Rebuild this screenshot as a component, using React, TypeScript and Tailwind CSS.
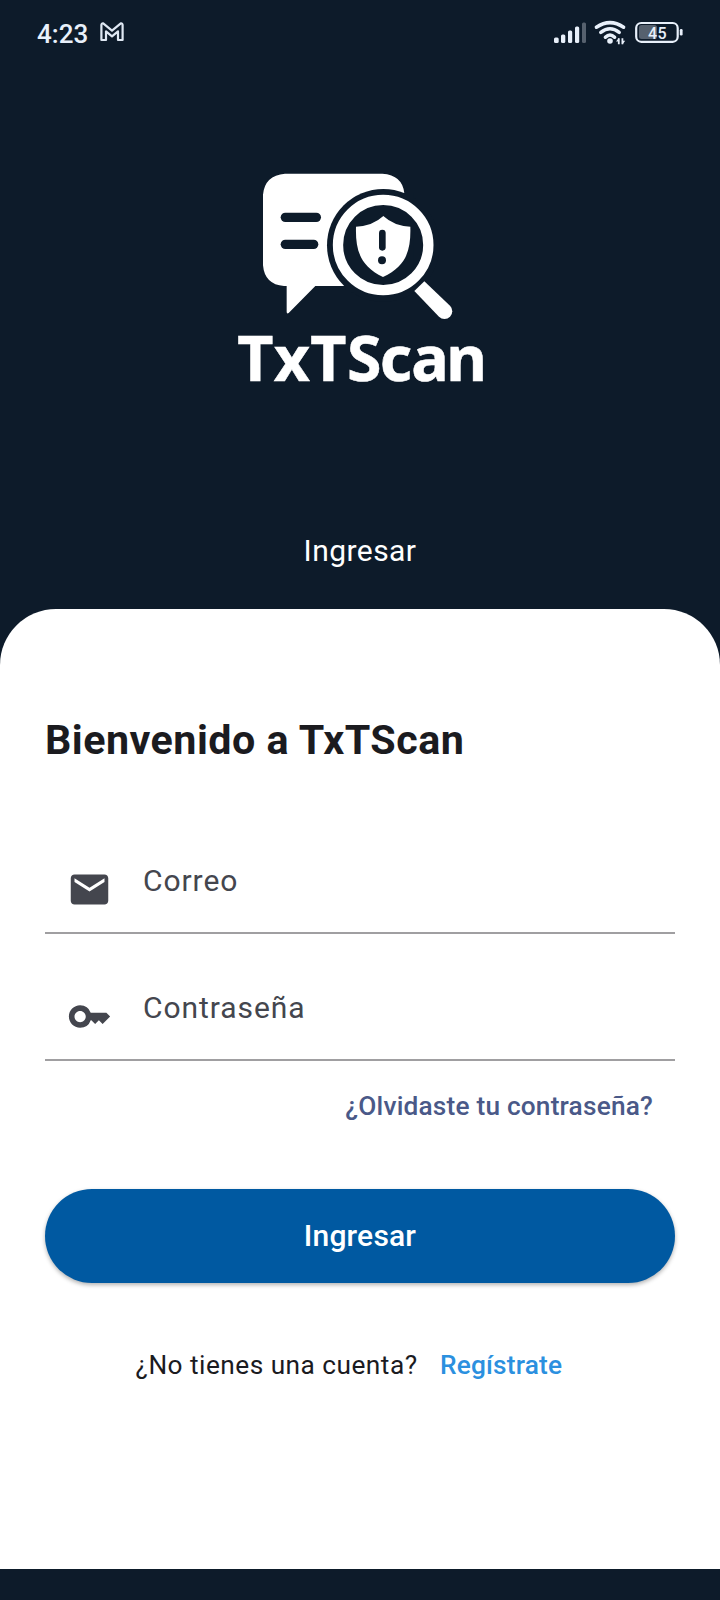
import type { ReactNode } from "react";
import { MdEmail, MdKey } from "react-icons/md";

function GmailIcon() {
  return (
    <svg className="ml-3 h-5 w-6" viewBox="0 0 24 20" fill="none" stroke="#dfe8f3" strokeWidth="2.2" strokeLinejoin="round">
      <path d="M1.4 18V3Q1.4 1.2 3.2 1.4L12 8.6 20.8 1.4Q22.6 1.2 22.6 3V18H18V9.4L12 14.4 6 9.4V18Z" />
    </svg>
  );
}

function SignalIcon() {
  return (
    <svg className="h-6 w-8" viewBox="0 0 32 24" fill="#e8f0fa">
      <rect x="0" y="17.5" width="4.7" height="5.5" rx="1.5" />
      <rect x="7" y="14.5" width="4.3" height="8.5" rx="1.5" />
      <rect x="14" y="10.5" width="4.2" height="12.5" rx="1.5" />
      <rect x="21" y="6.5" width="4.2" height="16.5" rx="1.5" />
      <rect x="28" y="2.5" width="4" height="20.5" rx="1.5" fill="#56616e" />
    </svg>
  );
}

function WifiIcon() {
  return (
    <svg className="ml-2 h-6 w-8 overflow-visible" viewBox="0 0 32 24" fill="none" stroke="#e8f0fa" strokeWidth="3.5" strokeLinecap="round">
      <path d="M2.4 7.2Q16-2 29.6 7.2" />
      <path d="M6.8 12.4Q16 5.2 25.2 12.4" />
      <path d="M11.4 17.2Q16 12.6 20.6 17.2" />
      <circle cx="16" cy="21" r="2.8" fill="#e8f0fa" stroke="none" />
      <path d="M24.8 18.2v6M28.4 18.2v6" strokeWidth="1.8" strokeLinecap="butt" />
      <path d="M22 21.6 24.8 18v3.6zM31.2 20.8 28.4 24.4v-3.6z" fill="#e8f0fa" stroke="none" />
    </svg>
  );
}

function BatteryIcon() {
  return (
    <svg className="ml-[9px] h-[22px] w-12" viewBox="0 0 48 22">
      <rect x="4" y="4" width="18" height="14" rx="2.5" fill="#56616e" />
      <rect x="1.2" y="2" width="41.5" height="18.8" rx="5" fill="none" stroke="#e8f0fa" strokeWidth="2.2" />
      <rect x="44.8" y="8" width="2.8" height="6.5" rx="1.2" fill="#e8f0fa" />
      <text x="22.5" y="17.6" textAnchor="middle" fill="#e8f0fa" fontSize="16" fontWeight="500" letterSpacing="0.3" fontFamily="Roboto, sans-serif">
        45
      </text>
    </svg>
  );
}

function Logo() {
  return (
    <svg className="h-60 w-70" viewBox="0 0 840 720" fill="#ffffff">
      <path d="M195 41H487Q548 45 553 100V378H286L206 459Q200 463 200 455V378H192Q134 374 129 316V104Q134 46 195 41Z" />
      <circle cx="490" cy="256" r="169" fill="#0d1b2a" />
      <rect x="540" y="99" width="40" height="290" fill="#0d1b2a" />
      <rect x="376" y="370" width="190" height="20" fill="#0d1b2a" />
      <circle cx="489.5" cy="255" r="135.5" fill="none" stroke="#ffffff" strokeWidth="31" />
      <path d="M583 393 613 364 690 437A23 23 0 0 1 657 470Z" />
      <path d="M490 168Q522 198 571 200C573 270 560 318 489 351C420 318 406 270 408 200Q458 198 490 168Z" />
      <g fill="#0d1b2a">
        <rect x="182" y="158" width="121" height="28" rx="14" />
        <rect x="182" y="239" width="113" height="28" rx="14" />
        <rect x="477" y="209" width="20" height="63" rx="10" />
        <circle cx="486" cy="301" r="12" />
      </g>
      <text x="52 161 271 381 479 574 679" y="661.5" fontSize="188" fontWeight="700" fontFamily="'Noto Sans', sans-serif" stroke="#ffffff" strokeWidth="1.5">
        TxTScan
      </text>
    </svg>
  );
}

function Field({ icon, label }: { icon: ReactNode; label: string }) {
  return (
    <div className="flex h-[127px] items-end border-b-2 border-[#a09fa1] pb-[20.5px] pl-[22.3px] text-[#44464e]">
      {icon}
      <span className="mb-[12.5px] ml-[30.7px] text-[30px] leading-9 tracking-[0.94px]">{label}</span>
    </div>
  );
}

export default function App() {
  return (
    <div className="flex h-[1600px] w-[720px] flex-col bg-[#0d1b2a] font-['Roboto',sans-serif]">
      <div className="flex h-16 items-center pr-[37px] pl-[37px]">
        <span className="mt-1 text-[26px] leading-8 font-medium text-[#e8f0fa]">4:23</span>
        <GmailIcon />
        <div className="ml-auto flex items-center">
          <SignalIcon />
          <WifiIcon />
          <BatteryIcon />
        </div>
      </div>
      <header className="flex h-[545px] flex-col items-center pt-24 text-white">
        <Logo />
        <h1 className="mt-[133px] text-[30px] leading-9 tracking-[0.45px]">Ingresar</h1>
      </header>
      <main className="flex h-[960px] flex-col rounded-t-[56px] bg-white px-[45px] pt-[107px]">
        <h2 className="text-[41.25px] leading-[48px] font-bold tracking-[0.47px] text-[#1b1b1f]">Bienvenido a TxTScan</h2>
        <div className="mt-[43px]">
          <Field icon={<MdEmail className="size-[45px]" />} label="Correo" />
          <Field icon={<MdKey className="size-[45px]" />} label="Contraseña" />
        </div>
        <a className="mt-[29px] mr-[22px] self-end text-[26.25px] leading-8 font-medium tracking-[0.19px] text-[#4a5988]">¿Olvidaste tu contraseña?</a>
        <button className="mt-[67px] h-[94px] rounded-full bg-[#0059a1] text-[30px] leading-9 font-medium tracking-[0.19px] text-white shadow-[0_2px_4px_rgba(0,0,0,0.3)]">
          Ingresar
        </button>
        <div className="mt-[66px] flex pl-[90.5px] text-[26.25px] leading-8">
          <span className="tracking-[0.47px] text-[#1b1b1f]">¿No tienes una cuenta?</span>
          <a className="ml-[22.5px] font-medium tracking-[0.19px] text-[#2b90df]">Regístrate</a>
        </div>
      </main>
    </div>
  );
}
